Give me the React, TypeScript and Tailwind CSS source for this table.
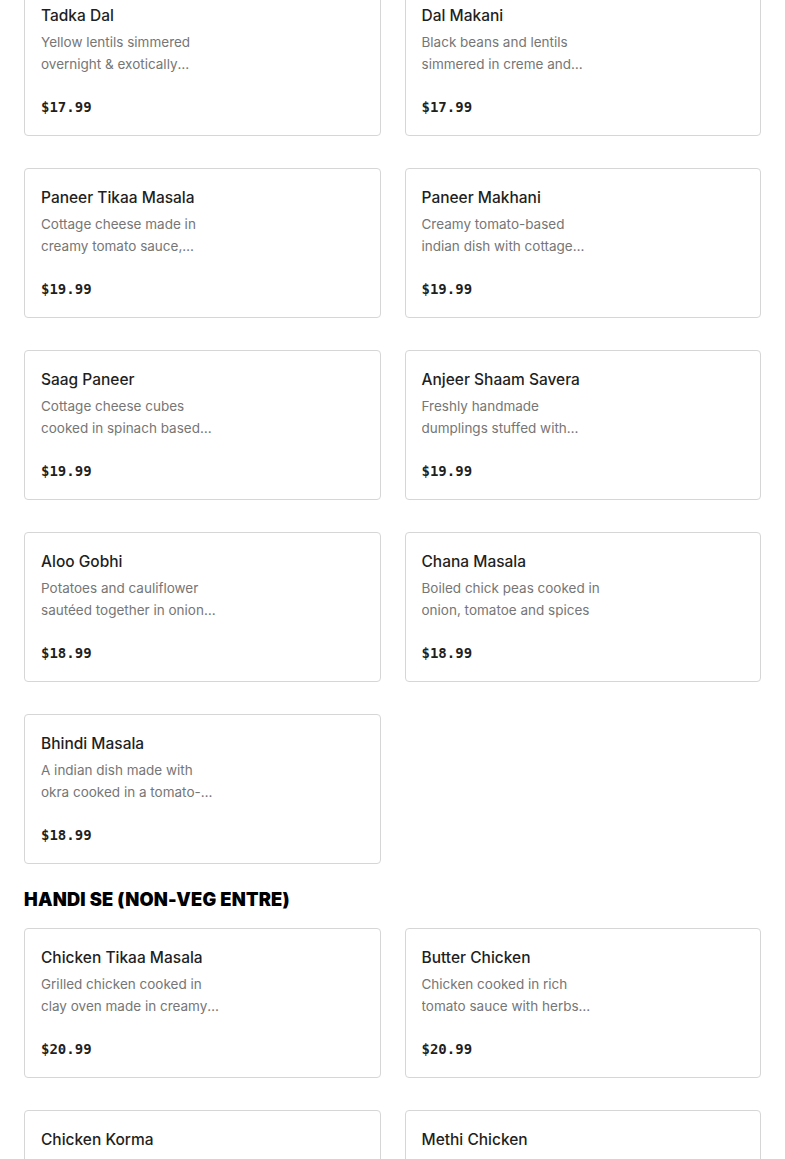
import React from "react";

type Item = { name: string; desc: string; price: string };

const veg: Item[] = [
  { name: "Tadka Dal", desc: "Yellow lentils simmered overnight & exotically tempered with spices", price: "$17.99" },
  { name: "Dal Makani", desc: "Black beans and lentils simmered in creme and butter", price: "$17.99" },
  { name: "Paneer Tikaa Masala", desc: "Cottage cheese made in creamy tomato sauce, onions and peppers", price: "$19.99" },
  { name: "Paneer Makhani", desc: "Creamy tomato-based indian dish with cottage cheese", price: "$19.99" },
  { name: "Saag Paneer", desc: "Cottage cheese cubes cooked in spinach based gravy", price: "$19.99" },
  { name: "Anjeer Shaam Savera", desc: "Freshly handmade dumplings stuffed with cottage cheese and figs", price: "$19.99" },
  { name: "Aloo Gobhi", desc: "Potatoes and cauliflower sautéed together in onion tomato masala", price: "$18.99" },
  { name: "Chana Masala", desc: "Boiled chick peas cooked in onion, tomatoe and spices", price: "$18.99" },
  { name: "Bhindi Masala", desc: "A indian dish made with okra cooked in a tomato-onion masala", price: "$18.99" },
];

const nonveg: Item[] = [
  { name: "Chicken Tikaa Masala", desc: "Grilled chicken cooked in clay oven made in creamy tomato sauce", price: "$20.99" },
  { name: "Butter Chicken", desc: "Chicken cooked in rich tomato sauce with herbs and butter", price: "$20.99" },
  { name: "Chicken Korma", desc: "Chicken cooked in a rich cashew nut gravy", price: "$20.99" },
  { name: "Methi Chicken", desc: "Chicken cooked with fenugreek leaves", price: "$20.99" },
];

function Card({ item }: { item: Item }) {
  return (
    <div className="h-[150px] rounded-[4px] border border-[#d6d6d6] bg-white px-4 pt-[17px] pb-4 flex flex-col">
      <div className="text-[15.5px] leading-[24px] font-medium text-[#1f1f1f]">{item.name}</div>
      <div className="mt-[3px] w-[180px] text-[13.5px] leading-[22px] text-[#767676] line-clamp-2">{item.desc}</div>
      <div
        className="mt-[23px] text-[14px] leading-[24px] font-bold text-[#1f1f1f]"
        style={{ fontFamily: '"DejaVu Sans Mono", "Liberation Mono", monospace' }}
      >
        {item.price}
      </div>
    </div>
  );
}

export default function App() {
  return (
    <div
      className="bg-white min-h-screen overflow-hidden"
      style={{ fontFamily: 'Inter, "Noto Sans", Arial, sans-serif' }}
    >
      <div className="px-6 mt-[-14px]">
        <div className="grid grid-cols-2 gap-x-6 gap-y-8">
          {veg.map((it) => (
            <Card key={it.name} item={it} />
          ))}
        </div>
        <h2
          className="mt-[21px] mb-[15px] text-[18.3px] leading-[28px] font-black text-black tracking-[0.2px]"
          style={{ fontFamily: 'Inter, "Liberation Sans", sans-serif' }}
        >
          HANDI SE (NON-VEG ENTRE)
        </h2>
        <div className="grid grid-cols-2 gap-x-6 gap-y-8">
          {nonveg.map((it) => (
            <Card key={it.name} item={it} />
          ))}
        </div>
      </div>
    </div>
  );
}
